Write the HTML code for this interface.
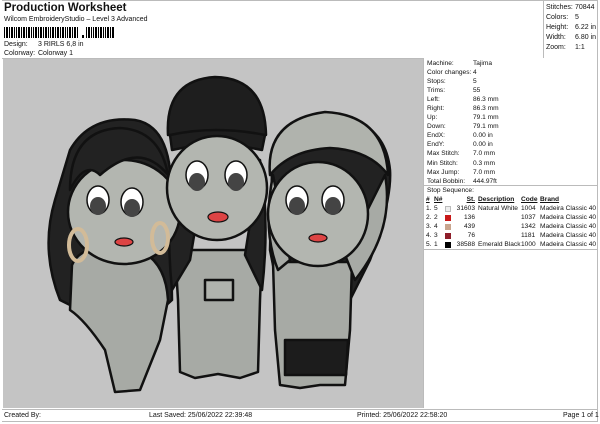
<!DOCTYPE html>
<html><head><meta charset="utf-8"><style>
*{margin:0;padding:0;box-sizing:border-box}
body{width:600px;height:424px;background:#fff;font-family:"Liberation Sans",sans-serif;color:#111;position:relative;overflow:hidden;font-size:7px}
.a{position:absolute;white-space:nowrap}
.hl{position:absolute;background:#bbb}
.t{position:absolute;white-space:nowrap;font-size:6.6px;line-height:9px}
.sw{position:absolute;width:6px;height:6px}
</style></head><body>
<div class="a" style="left:4px;top:2px;font-size:11.5px;font-weight:bold">Production Worksheet</div>
<div class="a" style="left:4px;top:16px">Wilcom EmbroideryStudio – Level 3 Advanced</div>
<svg class="a" style="left:4px;top:27px" width="112" height="12">
<g fill="#000">
<rect x="0" y="0" width="1" height="11"/><rect x="2" y="0" width="2" height="11"/><rect x="5" y="0" width="1" height="11"/><rect x="7" y="0" width="2" height="11"/><rect x="10" y="0" width="1" height="11"/><rect x="12" y="0" width="1" height="11"/><rect x="14" y="0" width="2" height="11"/><rect x="17" y="0" width="1" height="11"/><rect x="19" y="0" width="2" height="11"/><rect x="22" y="0" width="1" height="11"/><rect x="24" y="0" width="2" height="11"/><rect x="27" y="0" width="1" height="11"/><rect x="29" y="0" width="1" height="11"/><rect x="31" y="0" width="2" height="11"/><rect x="34" y="0" width="1" height="11"/><rect x="36" y="0" width="2" height="11"/><rect x="39" y="0" width="1" height="11"/><rect x="41" y="0" width="2" height="11"/><rect x="44" y="0" width="1" height="11"/><rect x="46" y="0" width="1" height="11"/><rect x="48" y="0" width="2" height="11"/><rect x="51" y="0" width="1" height="11"/><rect x="53" y="0" width="2" height="11"/><rect x="56" y="0" width="1" height="11"/><rect x="58" y="0" width="2" height="11"/><rect x="61" y="0" width="1" height="11"/><rect x="63" y="0" width="1" height="11"/><rect x="65" y="0" width="2" height="11"/><rect x="68" y="0" width="1" height="11"/><rect x="70" y="0" width="2" height="11"/><rect x="73" y="0" width="1" height="11"/>
<rect x="78" y="8" width="2" height="3"/>
<rect x="82" y="0" width="1" height="11"/><rect x="84" y="0" width="2" height="11"/><rect x="87" y="0" width="1" height="11"/><rect x="89" y="0" width="1" height="11"/><rect x="91" y="0" width="2" height="11"/><rect x="94" y="0" width="1" height="11"/><rect x="96" y="0" width="2" height="11"/><rect x="99" y="0" width="1" height="11"/><rect x="101" y="0" width="1" height="11"/><rect x="103" y="0" width="2" height="11"/><rect x="106" y="0" width="1" height="11"/><rect x="108" y="0" width="2" height="11"/></g></svg>
<div class="a" style="left:4px;top:41px">Design:</div><div class="a" style="left:38px;top:41px">3 RIRLS 6,8 in</div>
<div class="a" style="left:4px;top:50px">Colorway:</div><div class="a" style="left:38px;top:50px">Colorway 1</div>
<div class="hl" style="left:2px;top:58px;width:422px;height:1px"></div>
<div class="hl" style="left:543px;top:0;width:1px;height:58px"></div>
<div class="hl" style="left:2px;top:0;width:596px;height:1px"></div>
<div class="hl" style="left:597px;top:0;width:1px;height:422px"></div>
<div class="a" style="left:546px;top:3px;line-height:10px">Stitches:<br>Colors:<br>Height:<br>Width:<br>Zoom:</div>
<div class="a" style="left:575px;top:3px;line-height:10px">70844<br>5<br>6.22 in<br>6.80 in<br>1:1</div>
<div style="position:absolute;left:3px;top:59px;width:421px;height:349px;background:#c4c4c4;border-right:1px solid #bbb"></div>
<svg class="a" style="left:3px;top:59px" width="421" height="349" viewBox="3 59 421 349">
<g stroke="#111" stroke-width="2.5" stroke-linejoin="round">
<path d="M70 150 Q90 115 135 120 Q165 125 170 170 L172 300 L150 320 L80 310 L60 300 Q40 250 55 200 Z" fill="#222"/>
<path d="M272 170 Q270 120 325 115 Q385 118 390 170 Q392 200 370 260 L350 300 L280 300 L270 250 Z" fill="#222"/>
<path d="M72 265 Q80 245 120 245 Q165 250 168 300 L160 340 L140 390 L115 392 L105 350 Q85 320 70 310 Z" fill="#a7aaa5"/>
<path d="M175 250 L262 250 L260 300 L258 372 L240 378 L218 374 L195 378 L180 372 L178 300 Z" fill="#a7aaa5"/>
<path d="M273 262 L352 262 L350 330 L345 385 L320 385 L300 388 L280 385 L275 330 Z" fill="#a7aaa5"/>
<path d="M285 340 L348 340 L346 375 L285 375 Z" fill="#1c1c1c"/>
<path d="M205 280 L233 280 L233 300 L205 300 Z" fill="#b0b3ad"/>
<path d="M175 160 Q165 220 172 290 L190 260 L200 200 Z M260 160 Q270 220 262 290 L245 255 Z" fill="#222"/>
<path d="M270 175 Q265 120 325 112 Q385 115 388 175 Q370 150 330 148 Q290 150 270 175 Z" fill="#b0b3ad"/>
<path d="M273 175 Q262 230 278 270 L290 260 Z M385 175 Q395 230 355 280 L345 255 Z" fill="#a7aaa5"/>
<path d="M168 135 Q165 80 215 77 Q265 78 266 135 Z" fill="#1e1e1e"/>
<path d="M170 135 Q215 125 265 135 L262 150 Q215 140 172 150 Z" fill="#1e1e1e"/>
<ellipse cx="124" cy="212" rx="56" ry="52" fill="#b3b6b0"/>
<ellipse cx="217" cy="188" rx="50" ry="52" fill="#b3b6b0"/>
<ellipse cx="318" cy="214" rx="50" ry="52" fill="#b3b6b0"/>
<path d="M70 190 Q70 130 120 128 Q160 130 168 175 Q140 140 100 175 Q85 160 70 190 Z" fill="#222"/>
</g>
<g fill="#fff" stroke="#111" stroke-width="1.5">
<ellipse cx="98" cy="200" rx="11" ry="14"/><ellipse cx="132" cy="202" rx="11" ry="14"/>
<ellipse cx="197" cy="175" rx="11" ry="14"/><ellipse cx="236" cy="175" rx="11" ry="14"/>
<ellipse cx="297" cy="200" rx="11" ry="14"/><ellipse cx="333" cy="200" rx="11" ry="14"/>
</g>
<g fill="#444">
<ellipse cx="98" cy="206" rx="8" ry="9"/><ellipse cx="132" cy="208" rx="8" ry="9"/>
<ellipse cx="197" cy="182" rx="8" ry="9"/><ellipse cx="236" cy="182" rx="8" ry="9"/>
<ellipse cx="297" cy="206" rx="8" ry="9"/><ellipse cx="333" cy="206" rx="8" ry="9"/>
</g>
<g fill="#d44" stroke="#111" stroke-width="1.2">
<ellipse cx="124" cy="242" rx="9" ry="4"/><ellipse cx="218" cy="217" rx="10" ry="5"/><ellipse cx="318" cy="238" rx="9" ry="4"/>
</g>
<g fill="none" stroke="#d2bb98" stroke-width="4">
<ellipse cx="78" cy="245" rx="9" ry="16"/><ellipse cx="160" cy="238" rx="8" ry="15"/>
</g>
</svg>
<div class="t" style="left:427px;top:59px;line-height:9.05px">Machine:<br>Color changes:<br>Stops:<br>Trims:<br>Left:<br>Right:<br>Up:<br>Down:<br>EndX:<br>EndY:<br>Max Stitch:<br>Min Stitch:<br>Max Jump:<br>Total Bobbin:</div>
<div class="t" style="left:473px;top:59px;line-height:9.05px">Tajima<br>4<br>5<br>55<br>86.3 mm<br>86.3 mm<br>79.1 mm<br>79.1 mm<br>0.00 in<br>0.00 in<br>7.0 mm<br>0.3 mm<br>7.0 mm<br>444.97ft</div>
<div class="hl" style="left:424px;top:185px;width:174px;height:1px"></div>
<div class="t" style="left:427px;top:186px">Stop Sequence:</div>
<div class="t" style="left:426px;top:195px;font-weight:bold;text-decoration:underline">#</div>
<div class="t" style="left:434px;top:195px;font-weight:bold;text-decoration:underline">N#</div>
<div class="t" style="left:455px;width:20px;text-align:right;top:195px;font-weight:bold;text-decoration:underline">St.</div>
<div class="t" style="left:478px;top:195px;font-weight:bold;text-decoration:underline">Description</div>
<div class="t" style="left:521px;top:195px;font-weight:bold;text-decoration:underline">Code</div>
<div class="t" style="left:540px;top:195px;font-weight:bold;text-decoration:underline">Brand</div>
<div class="t" style="left:426px;top:204px">1.<br>2.<br>3.<br>4.<br>5.</div>
<div class="t" style="left:434px;top:204px">5<br>2<br>4<br>3<br>1</div>
<div class="sw" style="left:445px;top:206px;background:#eee;border:1px solid #bbb"></div>
<div class="sw" style="left:445px;top:215px;background:#c81818"></div>
<div class="sw" style="left:445px;top:224px;background:#c9a58e"></div>
<div class="sw" style="left:445px;top:233px;background:#8e1e2a"></div>
<div class="sw" style="left:445px;top:242px;background:#000"></div>
<div class="t" style="left:445px;width:30px;text-align:right;top:204px">31603<br>136<br>439<br>76<br>38588</div>
<div class="t" style="left:478px;top:204px">Natural White<br><br><br><br>Emerald Black</div>
<div class="t" style="left:521px;top:204px">1004<br>1037<br>1342<br>1181<br>1000</div>
<div class="t" style="left:540px;top:204px">Madeira Classic 40<br>Madeira Classic 40<br>Madeira Classic 40<br>Madeira Classic 40<br>Madeira Classic 40</div>
<div class="hl" style="left:424px;top:249px;width:174px;height:1px"></div>
<div class="hl" style="left:2px;top:409px;width:596px;height:1px"></div>
<div class="hl" style="left:2px;top:421px;width:596px;height:1px"></div>
<div class="a" style="left:4px;top:412px">Created By:</div>
<div class="a" style="left:149px;top:412px">Last Saved: 25/06/2022 22:39:48</div>
<div class="a" style="left:357px;top:412px">Printed: 25/06/2022 22:58:20</div>
<div class="a" style="left:563px;top:412px">Page 1 of 1</div>
</body></html>
